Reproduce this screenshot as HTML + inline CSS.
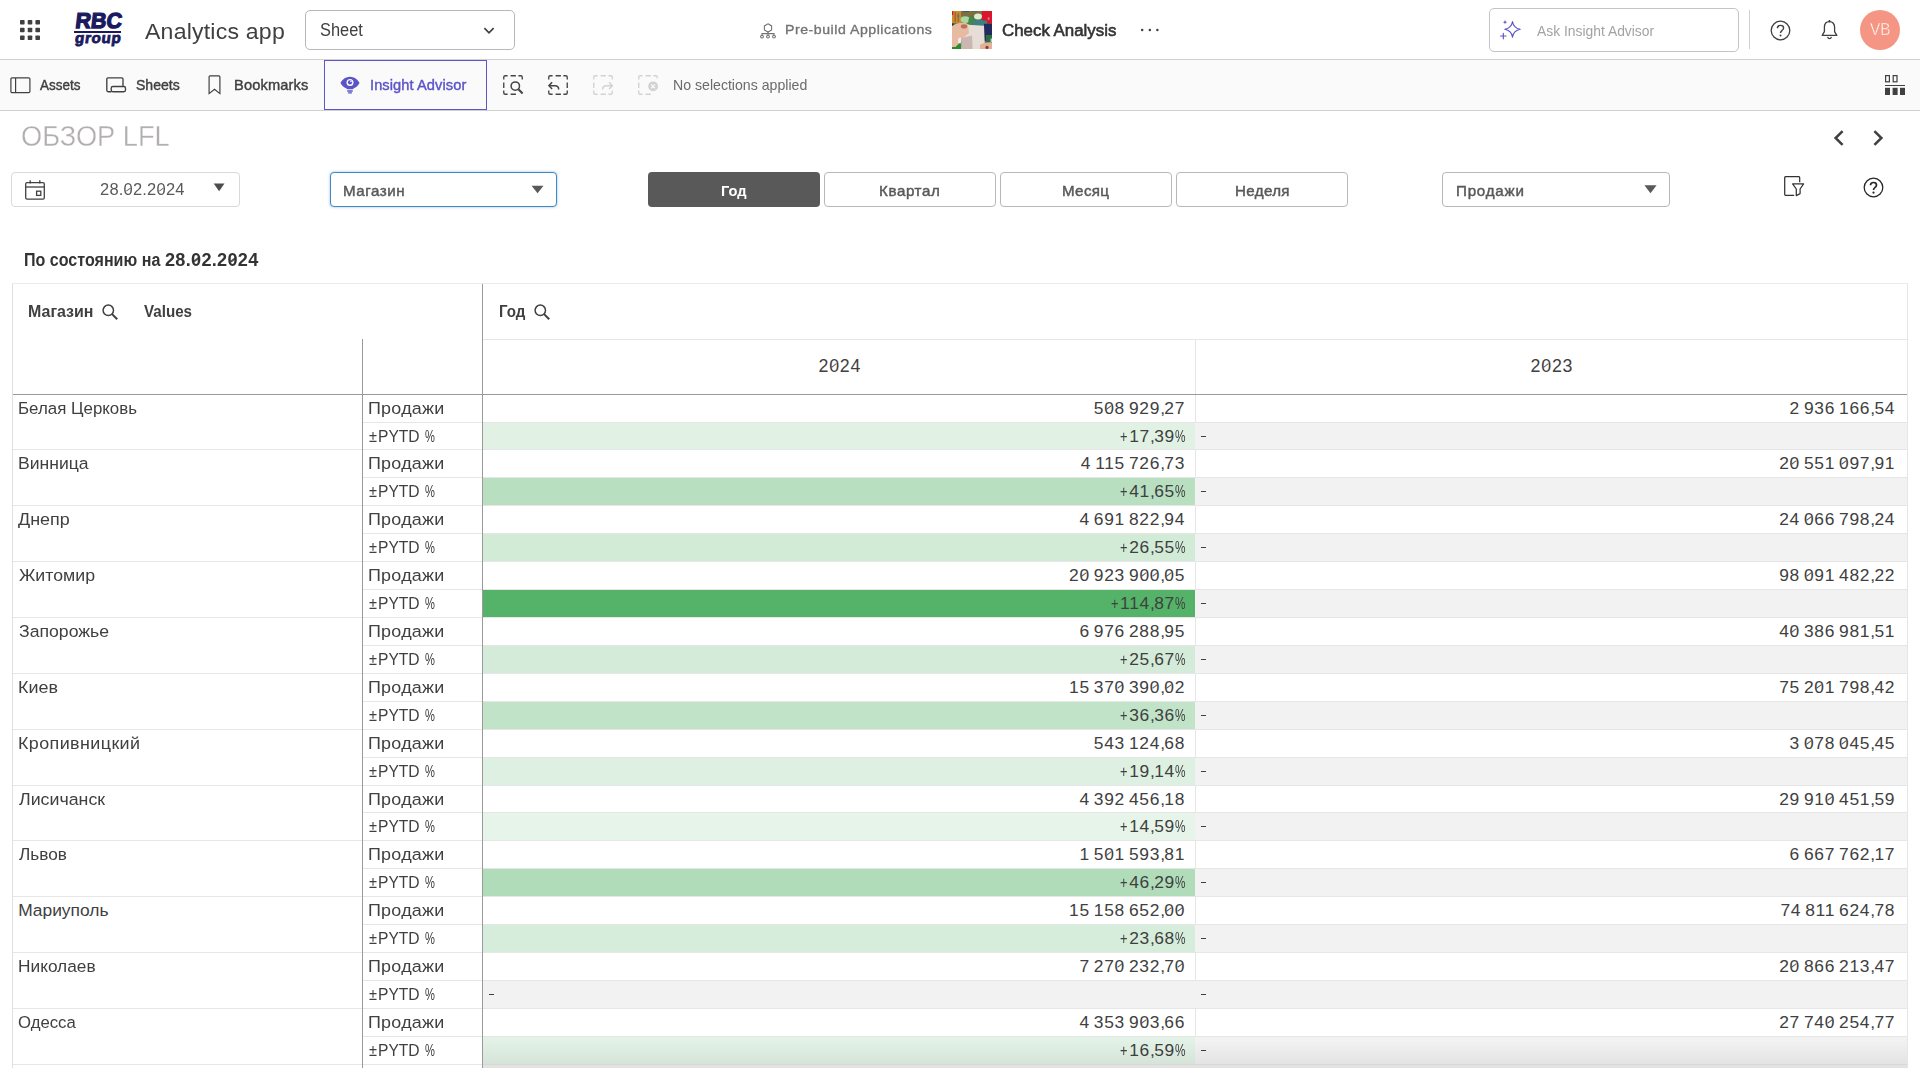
<!DOCTYPE html>
<html lang="ru"><head><meta charset="utf-8"><title>Check Analysis - ОБЗОР LFL</title>
<style>
html,body{margin:0;padding:0;background:#fff;}
body{width:1920px;height:1080px;overflow:hidden;position:relative;font-family:"Liberation Sans",sans-serif;}
.b{position:absolute;box-sizing:border-box;display:block;}
.t{position:absolute;white-space:nowrap;line-height:1;font-family:"Liberation Sans",sans-serif;}
.n{font-size:17.4px;letter-spacing:0.7px;color:#404040;}
.n i{font-style:normal;}
.z{font-weight:inherit;position:relative;}
.z::after{content:"";position:absolute;left:.112em;top:.506em;width:.333em;height:var(--zh,1px);background:currentColor;transform:rotate(-37deg);opacity:.85;}
.n .pc{display:inline-block;width:10.9px;letter-spacing:0;transform:scaleX(0.68);transform-origin:0 0;}
.n .pl{display:inline-block;width:8.9px;letter-spacing:0;transform:scaleX(0.74);transform-origin:0 0;}
</style></head>
<body>
<div class="b" style="left:0px;top:0px;width:1920px;height:59px;background:#fff;"></div>
<div class="b" style="left:0px;top:59px;width:1920px;height:1px;background:#d2d2d2;"></div>
<svg class="b" style="left:20px;top:20px;" width="20" height="20" viewBox="0 0 20 20"><rect x="0.0" y="0.0" width="4.6" height="4.6" rx="0.8" fill="#404040"/><rect x="7.7" y="0.0" width="4.6" height="4.6" rx="0.8" fill="#404040"/><rect x="15.4" y="0.0" width="4.6" height="4.6" rx="0.8" fill="#404040"/><rect x="0.0" y="7.7" width="4.6" height="4.6" rx="0.8" fill="#404040"/><rect x="7.7" y="7.7" width="4.6" height="4.6" rx="0.8" fill="#404040"/><rect x="15.4" y="7.7" width="4.6" height="4.6" rx="0.8" fill="#404040"/><rect x="0.0" y="15.4" width="4.6" height="4.6" rx="0.8" fill="#404040"/><rect x="7.7" y="15.4" width="4.6" height="4.6" rx="0.8" fill="#404040"/><rect x="15.4" y="15.4" width="4.6" height="4.6" rx="0.8" fill="#404040"/></svg>
<span class="t" style="top:10.00px;font-size:21.6px;color:#1a1a5e;left:76.74px;transform-origin:0 0;font-weight:700;transform:scaleX(0.9889) skewX(-7deg);-webkit-text-stroke:1.3px #1a1a5e;">RBC</span>
<div class="b" style="left:74px;top:31px;width:47px;height:2px;background:#1a1a5e;"></div>
<span class="t" style="top:31.00px;font-size:14.8px;color:#1a1a5e;left:75.78px;transform-origin:0 0;font-weight:700;letter-spacing:0.662px;transform:scaleX(1.0300) skewX(-7deg);-webkit-text-stroke:0.8px #1a1a5e;">group</span>
<span class="t" style="top:21.00px;font-size:22.4px;color:#404040;left:145.00px;transform-origin:0 0;letter-spacing:0.205px;transform:scaleX(1.0300) ;">Analytics app</span>
<div class="b" style="left:305px;top:10px;width:210px;height:40px;border:1px solid #b8b8b8;border-radius:5px;background:#fff;"></div>
<span class="t" style="top:22.00px;font-size:17.6px;color:#404040;left:320.30px;transform-origin:0 0;transform:scaleX(0.9304) ;">Sheet</span>
<svg class="b" style="left:482px;top:25px;" width="14" height="12" viewBox="0 0 14 12"><path d="M2.4 3.2 L7 7.8 L11.6 3.2" fill="none" stroke="#404040" stroke-width="1.7" stroke-linecap="butt" stroke-linejoin="miter"/></svg>
<svg class="b" style="left:759.5px;top:22.5px;" width="16" height="16" viewBox="0 0 16 16"><g fill="none" stroke="#737373" stroke-width="1.1"><path d="M8 0.8 L11.6 2.9 L11.6 6.9 L8 9 L4.4 6.9 L4.4 2.9 Z"/><path d="M8 9 V12.2 M2 12.2 V10.6 H14 V12.2"/><circle cx="2" cy="13.6" r="1.4"/><circle cx="8" cy="13.6" r="1.4"/><circle cx="14" cy="13.6" r="1.4"/></g></svg>
<span class="t" style="top:23.00px;font-size:13.7px;color:#737373;left:784.54px;transform-origin:0 0;letter-spacing:0.524px;transform:scaleX(1.0300) ;-webkit-text-stroke:0.35px #737373;">Pre-build Applications</span>
<svg class="b" style="left:952px;top:11px;" width="40" height="38" viewBox="0 0 40 38"><defs><filter id="bl" x="-10%" y="-10%" width="120%" height="120%"><feGaussianBlur stdDeviation="0.6"/></filter><clipPath id="cp"><rect x="0" y="0" width="40" height="38"/></clipPath></defs><g clip-path="url(#cp)"><g filter="url(#bl)"><rect x="-2" y="-2" width="44" height="42" fill="#4f7d4c"/><rect x="-2" y="-2" width="11.5" height="14" fill="#cf8a2f"/><rect x="2.6" y="1" width="1.2" height="10" fill="#9c5a2a"/><rect x="5.6" y="2" width="1.2" height="9" fill="#8a6a3a"/><rect x="-1" y="-1" width="2.2" height="5" fill="#c4201c"/><rect x="5.5" y="4" width="1.6" height="2.4" fill="#3f6fb0"/><rect x="-1" y="12.5" width="2.6" height="4" fill="#2a2a5e"/><rect x="9" y="-2" width="21" height="7.5" fill="#7c6f42"/><rect x="11" y="-1" width="6" height="1.8" fill="#2f4f7a"/><rect x="20" y="-1" width="5" height="1.6" fill="#3a6a58"/><ellipse cx="13.2" cy="8.6" rx="4.6" ry="3.4" fill="#abd89e"/><ellipse cx="19" cy="10" rx="2.6" ry="3.4" fill="#3f8a4a"/><ellipse cx="26" cy="5.6" rx="4" ry="3" fill="#dfe9d6"/><rect x="30" y="-2" width="12" height="14.5" fill="#d91529"/><ellipse cx="36.6" cy="7.6" rx="1" ry="1.6" fill="#e86aa0"/><rect x="21" y="9.5" width="14" height="5.5" fill="#3c8084"/><rect x="32" y="12.8" width="10" height="17" fill="#242a5e"/><rect x="34" y="24" width="8" height="7.5" fill="#2f6d3c"/><rect x="38.6" y="27.5" width="2" height="3.5" fill="#b9d4ea"/><rect x="-2" y="32" width="12" height="8" fill="#2c8c2c"/><path d="M0 15 Q6 10.5 14 12 L21 16 L18 24 L9.5 30 L3.5 36 L0 36 Z" fill="#e8baa1"/><ellipse cx="12" cy="15.4" rx="3.2" ry="2.1" fill="#b4735a"/><path d="M6.2 27.5 L9 26.5 L8.8 32.6 L6.2 32 Z" fill="#f1efee"/><path d="M16 13.8 L32 14.8 L33 38 L9.4 38 L10 28 L17 22 Z" fill="#e7ddd7"/><path d="M9.4 27 L20 24.5 L20.6 38 L9.4 38 Z" fill="#cbb6b1"/><path d="M28 34 Q33 30.2 42 31.5 L42 40 L28 40 Z" fill="#e3b199"/><ellipse cx="35" cy="36.4" rx="1.6" ry="1.6" fill="#8c3a2c"/></g></g></svg>
<span class="t" style="top:22.00px;font-size:17.3px;color:#333;left:1001.55px;transform-origin:0 0;transform:scaleX(0.9764) ;-webkit-text-stroke:0.6px #333;">Check Analysis</span>
<svg class="b" style="left:1140px;top:27px;" width="20" height="6" viewBox="0 0 20 6"><circle cx="2.2" cy="3" r="1.25" fill="#404040"/><circle cx="9.8" cy="3" r="1.25" fill="#404040"/><circle cx="17.4" cy="3" r="1.25" fill="#404040"/></svg>
<div class="b" style="left:1489px;top:8px;width:250px;height:44px;border:1px solid #c4c4c4;border-radius:5px;background:#fff;"></div>
<svg class="b" style="left:1500px;top:20px;" width="21" height="20" viewBox="0 0 21 20"><g fill="none" stroke="#5b54c7" stroke-width="1.15" stroke-linejoin="round"><path d="M12.5 1.5 C13.2 6.3 15.3 8.4 20.2 9.3 C15.3 10.2 13.2 12.3 12.5 17.1 C11.8 12.3 9.7 10.2 4.8 9.3 C9.7 8.4 11.8 6.3 12.5 1.5 Z"/><path d="M3.3 13.2 V18.8 M0.5 16 H6.1" stroke-linecap="round"/></g><path d="M5 0 L5.6 1.6 L7.2 2.2 L5.6 2.8 L5 4.4 L4.4 2.8 L2.8 2.2 L4.4 1.6 Z" fill="#5b54c7"/></svg>
<span class="t" style="top:23.00px;font-size:15.2px;color:#a3a3a3;left:1536.60px;transform-origin:0 0;transform:scaleX(0.9127) ;">Ask Insight Advisor</span>
<div class="b" style="left:1749px;top:10px;width:1px;height:39px;background:#d0d0d0;"></div>
<svg class="b" style="left:1769.5px;top:19.5px;" width="21" height="21" viewBox="0 0 21 21"><circle cx="10.5" cy="10.5" r="9.3" fill="none" stroke="#404040" stroke-width="1.3"/><path d="M7.4 8.3 C7.4 6.4 8.8 5.4 10.5 5.4 C12.3 5.4 13.6 6.5 13.6 8 C13.6 9.3 12.8 9.9 11.9 10.6 C11 11.3 10.5 11.8 10.5 13" fill="none" stroke="#404040" stroke-width="1.4"/><circle cx="10.5" cy="15.4" r="1" fill="#404040"/></svg>
<svg class="b" style="left:1821px;top:20px;" width="17" height="20" viewBox="0 0 17 20"><path d="M8.5 1.6 C5.2 1.6 3.4 4 3.4 7.4 V11.6 L1.2 15.4 H15.8 L13.6 11.6 V7.4 C13.6 4 11.8 1.6 8.5 1.6 Z" fill="none" stroke="#404040" stroke-width="1.3" stroke-linejoin="round"/><path d="M6.6 16.8 C6.9 18 7.6 18.6 8.5 18.6 C9.4 18.6 10.1 18 10.4 16.8" fill="none" stroke="#404040" stroke-width="1.3"/><path d="M8.5 0.4 V1.8" stroke="#404040" stroke-width="1.6" stroke-linecap="round"/></svg>
<div class="b" style="left:1860px;top:10px;width:40px;height:40px;border-radius:50%;background:#f59684;"></div>
<span class="t" style="top:21.00px;font-size:16.4px;color:#fff;left:1869.90px;transform-origin:0 0;transform:scaleX(0.9381) ;-webkit-text-stroke:0.45px #f59684;">VB</span>
<div class="b" style="left:0px;top:60px;width:1920px;height:50px;background:#fafafa;"></div>
<div class="b" style="left:0px;top:110px;width:1920px;height:1px;background:#d0d0d0;"></div>
<svg class="b" style="left:9.5px;top:76.5px;" width="21" height="17" viewBox="0 0 21 17"><rect x="0.9" y="0.9" width="19" height="14.8" rx="1.2" fill="none" stroke="#404040" stroke-width="1.2"/><path d="M5.6 0.9 V15.7" stroke="#404040" stroke-width="1.2"/></svg>
<span class="t" style="top:78.00px;font-size:14.2px;color:#404040;left:40.40px;transform-origin:0 0;transform:scaleX(0.9515) ;-webkit-text-stroke:0.4px #404040;">Assets</span>
<svg class="b" style="left:106px;top:77px;" width="21" height="16" viewBox="0 0 21 16"><path d="M5.4 14.7 H2.2 C1.3 14.7 0.8 14.1 0.8 13.3 V2.1 C0.8 1.3 1.3 0.8 2.1 0.8 H15.7 C16.5 0.8 17 1.3 17 2.1 V9.6" fill="none" stroke="#404040" stroke-width="1.35"/><rect x="5.2" y="9.5" width="14.3" height="5.2" rx="1.7" fill="none" stroke="#404040" stroke-width="1.35"/></svg>
<span class="t" style="top:78.00px;font-size:14.2px;color:#404040;left:135.78px;transform-origin:0 0;transform:scaleX(0.9896) ;-webkit-text-stroke:0.4px #404040;">Sheets</span>
<svg class="b" style="left:207.5px;top:75px;" width="13" height="20" viewBox="0 0 13 20"><path d="M1.1 1.9 C1.1 1.3 1.5 0.9 2.1 0.9 H10.9 C11.5 0.9 11.9 1.3 11.9 1.9 V18.6 L6.5 14.2 L1.1 18.6 Z" fill="none" stroke="#404040" stroke-width="1.2" stroke-linejoin="miter"/></svg>
<span class="t" style="top:78.00px;font-size:14.2px;color:#404040;left:234.24px;transform-origin:0 0;letter-spacing:0.144px;transform:scaleX(1.0300) ;-webkit-text-stroke:0.4px #404040;">Bookmarks</span>
<div class="b" style="left:324px;top:60px;width:163px;height:50px;border:1px solid #5d55c8;background:#fafafa;"></div>
<svg class="b" style="left:340px;top:76px;" width="20" height="18" viewBox="0 0 20 18"><path d="M10 0.8 C4.8 0.8 1.6 4.6 0.5 6.9 C1.5 8.9 3.7 11.4 6.7 12.5 V13.2 H13.3 V12.5 C16.3 11.4 18.5 8.9 19.5 6.9 C18.4 4.6 15.2 0.8 10 0.8 Z" fill="#5b54c7"/><circle cx="10" cy="6.4" r="3.5" fill="#fafafa"/><circle cx="10" cy="6.4" r="2.1" fill="#5b54c7"/><circle cx="10.9" cy="5.5" r="0.8" fill="#fafafa"/><rect x="7.2" y="14.3" width="5.6" height="1.5" rx="0.4" fill="#5b54c7"/><rect x="8" y="16.3" width="4" height="1.2" rx="0.5" fill="#5b54c7"/></svg>
<span class="t" style="top:78.00px;font-size:14.2px;color:#5b54c7;left:370.01px;transform-origin:0 0;letter-spacing:0.084px;transform:scaleX(1.0300) ;-webkit-text-stroke:0.4px #5b54c7;">Insight Advisor</span>
<svg class="b" style="left:503px;top:75px;" width="21" height="21" viewBox="0 0 21 21"><path d="M0.75 4.6 V2.25 Q0.75 0.75 2.25 0.75 H4.6 M7.6 0.75 H12.9 M15.4 0.75 H17.75 Q19.25 0.75 19.25 2.25 V4.6 M0.75 7.6 V12.9 M0.75 15.4 V17.75 Q0.75 19.25 2.25 19.25 H4.6 M7.6 19.25 H12.9" fill="none" stroke="#454545" stroke-width="1.35"/><circle cx="12.3" cy="11.1" r="4.2" fill="none" stroke="#454545" stroke-width="1.5"/><path d="M15.4 14.2 L19.6 18.4" stroke="#454545" stroke-width="2.1"/></svg>
<svg class="b" style="left:548px;top:75px;" width="21" height="21" viewBox="0 0 21 21"><path d="M0.75 4.6 V2.25 Q0.75 0.75 2.25 0.75 H4.6 M7.6 0.75 H12.9 M15.4 0.75 H17.75 Q19.25 0.75 19.25 2.25 V4.6 M19.25 7.6 V12.9 M0.75 15.4 V17.75 Q0.75 19.25 2.25 19.25 H4.6 M7.6 19.25 H12.9 M15.4 19.25 H17.75 Q19.25 19.25 19.25 17.75 V15.4" fill="none" stroke="#454545" stroke-width="1.35"/><path d="M1 10.7 H7 C9.4 10.7 10.7 12 10.7 14.6" fill="none" stroke="#454545" stroke-width="1.5"/><path d="M4.1 7.3 L0.9 10.7 L4.1 14.1" fill="none" stroke="#454545" stroke-width="1.5"/></svg>
<svg class="b" style="left:593px;top:75px;" width="21" height="21" viewBox="0 0 21 21"><path d="M0.75 4.6 V2.25 Q0.75 0.75 2.25 0.75 H4.6 M7.6 0.75 H12.9 M15.4 0.75 H17.75 Q19.25 0.75 19.25 2.25 V4.6 M0.75 7.6 V12.9 M0.75 15.4 V17.75 Q0.75 19.25 2.25 19.25 H4.6 M7.6 19.25 H12.9 M15.4 19.25 H17.75 Q19.25 19.25 19.25 17.75 V15.4" fill="none" stroke="#d2d2d2" stroke-width="1.35"/><path d="M19.2 10.7 H13.4 C11 10.7 9.6 12 9.6 14.6" fill="none" stroke="#d2d2d2" stroke-width="1.5"/><path d="M16.1 7.3 L19.3 10.7 L16.1 14.1" fill="none" stroke="#d2d2d2" stroke-width="1.5"/></svg>
<svg class="b" style="left:638px;top:75px;" width="21" height="21" viewBox="0 0 21 21"><path d="M0.75 4.6 V2.25 Q0.75 0.75 2.25 0.75 H4.6 M7.6 0.75 H12.9 M15.4 0.75 H17.75 Q19.25 0.75 19.25 2.25 V3.2 M0.75 7.6 V12.9 M0.75 15.4 V17.75 Q0.75 19.25 2.25 19.25 H4.6 M7.6 19.25 H12.9" fill="none" stroke="#d2d2d2" stroke-width="1.35"/><circle cx="15.1" cy="11.3" r="4.9" fill="#d2d2d2"/><path d="M13.2 9.4 L17 13.2 M17 9.4 L13.2 13.2" stroke="#fafafa" stroke-width="1.3"/></svg>
<span class="t" style="top:78.00px;font-size:14.2px;color:#6b6b6b;left:673.18px;transform-origin:0 0;transform:scaleX(0.9955) ;">No selections applied</span>
<svg class="b" style="left:1885px;top:75px;" width="20" height="20" viewBox="0 0 20 20"><rect x="0.6" y="0.6" width="3.8" height="6.2" fill="none" stroke="#404040" stroke-width="1.2"/><rect x="8.2" y="0.6" width="3.8" height="6.2" fill="none" stroke="#404040" stroke-width="1.2"/><rect x="0" y="10" width="20" height="1" fill="#404040"/><rect x="0" y="12.8" width="5" height="7.2" fill="#404040"/><rect x="7.6" y="12.8" width="5" height="7.2" fill="#404040"/><rect x="15" y="12.8" width="5" height="7.2" fill="#404040"/></svg>
<span class="t" style="top:121.00px;font-size:29.7px;color:#b3afaf;left:21.04px;transform-origin:0 0;transform:scaleX(0.9174) ;-webkit-text-stroke:0.3px #fff;">ОБЗОР LFL</span>
<svg class="b" style="left:1832px;top:129px;" width="14" height="18" viewBox="0 0 14 18"><path d="M10.6 2.2 L3.6 9 L10.6 15.8" fill="none" stroke="#404040" stroke-width="2.5"/></svg>
<svg class="b" style="left:1871.2px;top:129px;" width="14" height="18" viewBox="0 0 14 18"><path d="M3.4 2.2 L10.4 9 L3.4 15.8" fill="none" stroke="#404040" stroke-width="2.5"/></svg>
<div class="b" style="left:11px;top:172px;width:229px;height:35px;border:1px solid #d9d9d9;border-radius:4px;background:#fff;"></div>
<svg class="b" style="left:25px;top:180px;" width="20" height="20" viewBox="0 0 20 20"><rect x="0.7" y="2.7" width="18.6" height="16.4" rx="1.4" fill="none" stroke="#404040" stroke-width="1.3"/><path d="M0.7 7 H19.3" stroke="#404040" stroke-width="1.3"/><path d="M5.2 0.3 V3.4 M14.8 0.3 V3.4" stroke="#404040" stroke-width="1.3"/><rect x="11.6" y="11.2" width="4.2" height="4.2" fill="none" stroke="#404040" stroke-width="1.3"/></svg>
<span class="t" style="top:182.00px;font-size:16px;color:#595959;left:100.48px;transform-origin:0 0;letter-spacing:0.206px;transform:scaleX(1.0300) ;">28.<b class="z">0</b>2.2<b class="z">0</b>24</span>
<svg class="b" style="left:213px;top:183px;" width="12" height="9" viewBox="0 0 12 9"><path d="M0.7 0.4 H11.5 L6.1 8.2 Z" fill="#4d4d4d"/></svg>
<div class="b" style="left:330px;top:172px;width:227px;height:35px;border:1px solid #3f8ac4;border-radius:4px;background:#fff;box-shadow:0 0 3px rgba(63,138,196,0.55);"></div>
<span class="t" style="top:184.00px;font-size:14.7px;color:#595959;left:342.74px;transform-origin:0 0;letter-spacing:0.535px;transform:scaleX(1.0300) ;-webkit-text-stroke:0.45px #595959;">Магазин</span>
<svg class="b" style="left:531px;top:185px;" width="13" height="9" viewBox="0 0 13 9"><path d="M0.6 0.7 H12.5 L6.55 8.3 Z" fill="#595959"/></svg>
<div class="b" style="left:648px;top:172px;width:172px;height:35px;background:#595959;border-radius:4px;"></div>
<span class="t" style="top:183.00px;font-size:15.4px;color:#fff;left:720.65px;transform-origin:0 0;font-weight:700;transform:scaleX(0.9522) ;">Год</span>
<div class="b" style="left:824px;top:172px;width:172px;height:35px;border:1px solid #b8b8b8;border-radius:4px;background:#fff;"></div>
<span class="t" style="top:184.00px;font-size:14.7px;color:#595959;left:879.44px;transform-origin:0 0;letter-spacing:0.593px;transform:scaleX(1.0300) ;-webkit-text-stroke:0.45px #595959;">Квартал</span>
<div class="b" style="left:1000px;top:172px;width:172px;height:35px;border:1px solid #b8b8b8;border-radius:4px;background:#fff;"></div>
<span class="t" style="top:184.00px;font-size:14.7px;color:#595959;left:1062.14px;transform-origin:0 0;letter-spacing:0.342px;transform:scaleX(1.0300) ;-webkit-text-stroke:0.45px #595959;">Месяц</span>
<div class="b" style="left:1176px;top:172px;width:172px;height:35px;border:1px solid #b8b8b8;border-radius:4px;background:#fff;"></div>
<span class="t" style="top:184.00px;font-size:14.7px;color:#595959;left:1234.54px;transform-origin:0 0;letter-spacing:0.339px;transform:scaleX(1.0300) ;-webkit-text-stroke:0.45px #595959;">Неделя</span>
<div class="b" style="left:1442px;top:172px;width:228px;height:35px;border:1px solid #b8b8b8;border-radius:4px;background:#fff;"></div>
<span class="t" style="top:184.00px;font-size:14.7px;color:#595959;left:1455.54px;transform-origin:0 0;letter-spacing:0.763px;transform:scaleX(1.0300) ;-webkit-text-stroke:0.45px #595959;">Продажи</span>
<svg class="b" style="left:1644px;top:185px;" width="13" height="9" viewBox="0 0 13 9"><path d="M0.4 0.2 H12.6 L6.5 8.3 Z" fill="#595959"/></svg>
<svg class="b" style="left:1783.6px;top:176.3px;" width="21" height="21" viewBox="0 0 21 21"><path d="M10.2 19.4 H1.8 C1.2 19.4 0.7 18.9 0.7 18.3 V1.7 C0.7 1.1 1.2 0.6 1.8 0.6 H14.6 C15.2 0.6 15.7 1.1 15.7 1.7 V6.2" fill="none" stroke="#333" stroke-width="1.25"/><path d="M8.6 7.9 H19.6 L16.1 13 V17.6 L12.3 19.6 V13 Z" fill="#fff" stroke="#333" stroke-width="1.25" stroke-linejoin="round"/></svg>
<svg class="b" style="left:1863.2px;top:176.7px;" width="21" height="21" viewBox="0 0 21 21"><circle cx="10.5" cy="10.5" r="9.3" fill="none" stroke="#262626" stroke-width="1.3"/><path d="M7.5 8.3 C7.5 6.5 8.8 5.5 10.5 5.5 C12.3 5.5 13.5 6.5 13.5 8 C13.5 9.3 12.8 9.9 11.9 10.6 C11 11.3 10.5 11.8 10.5 13" fill="none" stroke="#262626" stroke-width="1.7"/><circle cx="10.5" cy="15.6" r="1.15" fill="#262626"/></svg>
<span class="t" style="top:252.00px;font-size:17.6px;color:#333;left:23.77px;transform-origin:0 0;font-weight:700;transform:scaleX(0.9130) ;">По состоянию на</span>
<span class="t" style="top:252.00px;font-size:17.6px;color:#333;left:164.89px;transform-origin:0 0;font-weight:700;letter-spacing:0.275px;transform:scaleX(1.0300) ;--zh:1.6px;">28.<b class="z">0</b>2.2<b class="z">0</b>24</span>
<div class="b" style="left:12px;top:283px;width:1896px;height:1px;background:#ebebeb;"></div>
<div class="b" style="left:12px;top:284px;width:1px;height:784px;background:#e0e0e0;"></div>
<div class="b" style="left:1907px;top:284px;width:1px;height:784px;background:#e6e6e6;"></div>
<span class="t" style="top:303.00px;font-size:16.3px;color:#404040;left:28.42px;transform-origin:0 0;font-weight:700;transform:scaleX(0.9810) ;">Магазин</span>
<svg class="b" style="left:102px;top:304px;" width="16" height="16" viewBox="0 0 16 16"><circle cx="6.3" cy="6.3" r="5.2" fill="none" stroke="#404040" stroke-width="1.5"/><path d="M10.1 10.1 L15.2 15.2" stroke="#404040" stroke-width="2" stroke-linecap="butt"/></svg>
<span class="t" style="top:303.00px;font-size:16.3px;color:#404040;left:144.40px;transform-origin:0 0;font-weight:700;transform:scaleX(0.9297) ;">Values</span>
<span class="t" style="top:303.00px;font-size:16.3px;color:#404040;left:498.67px;transform-origin:0 0;font-weight:700;transform:scaleX(0.9284) ;">Год</span>
<svg class="b" style="left:534px;top:304px;" width="16" height="16" viewBox="0 0 16 16"><circle cx="6.3" cy="6.3" r="5.2" fill="none" stroke="#404040" stroke-width="1.5"/><path d="M10.1 10.1 L15.2 15.2" stroke="#404040" stroke-width="2" stroke-linecap="butt"/></svg>
<div class="b" style="left:483px;top:339px;width:1424px;height:1px;background:#e6e6e6;"></div>
<div class="b" style="left:1195px;top:340px;width:1px;height:54px;background:#e6e6e6;"></div>
<span class="t" style="top:358.00px;font-size:17.8px;color:#404040;left:818.52px;transform-origin:0 0;letter-spacing:0.725px;">2<b class="z">0</b>24</span>
<span class="t" style="top:358.00px;font-size:17.8px;color:#404040;left:1530.62px;transform-origin:0 0;letter-spacing:0.775px;">2<b class="z">0</b>23</span>
<div class="b" style="left:483px;top:423px;width:712px;height:26px;background:#e1f2e5;"></div>
<div class="b" style="left:1195px;top:423px;width:712px;height:26px;background:#f2f2f2;"></div>
<div class="b" style="left:1195px;top:395px;width:1px;height:27px;background:#e6e6e6;"></div>
<div class="b" style="left:363px;top:422px;width:1544px;height:1px;background:#e6e6e6;"></div>
<div class="b" style="left:13px;top:449px;width:1894px;height:1px;background:#e6e6e6;"></div>
<span class="t" style="top:400.00px;font-size:17.4px;color:#404040;left:18.16px;transform-origin:0 0;transform:scaleX(0.9711) ;">Белая Церковь</span>
<span class="t" style="top:400.00px;font-size:17.4px;color:#404040;left:367.78px;transform-origin:0 0;letter-spacing:0.243px;transform:scaleX(1.0300) ;">Продажи</span>
<span class="t" style="top:428.00px;font-size:17.4px;color:#404040;left:369.28px;transform-origin:0 0;transform:scaleX(0.8353) ;">±</span>
<span class="t" style="top:428.00px;font-size:17.4px;color:#404040;left:378.47px;transform-origin:0 0;transform:scaleX(0.8975) ;">PYTD</span>
<span class="t" style="top:428.00px;font-size:17.4px;color:#404040;left:424.68px;transform-origin:0 0;transform:scaleX(0.6400) ;">%</span>
<span class="t n" style="top:400.00px;right:734.90px;">5<b class="z">0</b>8<i style="letter-spacing:-0.8px"> </i>929<i style="letter-spacing:-0.6px">,</i>27</span>
<span class="t n" style="top:400.00px;right:24.80px;">2<i style="letter-spacing:-0.8px"> </i>936<i style="letter-spacing:-0.8px"> </i>166<i style="letter-spacing:-0.6px">,</i>54</span>
<span class="t n" style="top:428.00px;right:734.20px;"><i class="pl">+</i>17<i style="letter-spacing:-0.6px">,</i>39<i class="pc">%</i></span>
<div class="b" style="left:1201px;top:436px;width:5px;height:1.3px;background:#404040;"></div>
<div class="b" style="left:483px;top:478px;width:712px;height:27px;background:#b8dfc0;"></div>
<div class="b" style="left:1195px;top:478px;width:712px;height:27px;background:#f2f2f2;"></div>
<div class="b" style="left:1195px;top:450px;width:1px;height:27px;background:#e6e6e6;"></div>
<div class="b" style="left:363px;top:477px;width:1544px;height:1px;background:#e6e6e6;"></div>
<div class="b" style="left:13px;top:505px;width:1894px;height:1px;background:#e6e6e6;"></div>
<span class="t" style="top:455.00px;font-size:17.4px;color:#404040;left:18.01px;transform-origin:0 0;transform:scaleX(1.0102) ;">Винница</span>
<span class="t" style="top:455.00px;font-size:17.4px;color:#404040;left:367.78px;transform-origin:0 0;letter-spacing:0.243px;transform:scaleX(1.0300) ;">Продажи</span>
<span class="t" style="top:483.00px;font-size:17.4px;color:#404040;left:369.28px;transform-origin:0 0;transform:scaleX(0.8353) ;">±</span>
<span class="t" style="top:483.00px;font-size:17.4px;color:#404040;left:378.47px;transform-origin:0 0;transform:scaleX(0.8975) ;">PYTD</span>
<span class="t" style="top:483.00px;font-size:17.4px;color:#404040;left:424.68px;transform-origin:0 0;transform:scaleX(0.6400) ;">%</span>
<span class="t n" style="top:455.00px;right:734.90px;">4<i style="letter-spacing:-0.8px"> </i>115<i style="letter-spacing:-0.8px"> </i>726<i style="letter-spacing:-0.6px">,</i>73</span>
<span class="t n" style="top:455.00px;right:24.80px;">2<b class="z">0</b><i style="letter-spacing:-0.8px"> </i>551<i style="letter-spacing:-0.8px"> </i><b class="z">0</b>97<i style="letter-spacing:-0.6px">,</i>91</span>
<span class="t n" style="top:483.00px;right:734.20px;"><i class="pl">+</i>41<i style="letter-spacing:-0.6px">,</i>65<i class="pc">%</i></span>
<div class="b" style="left:1201px;top:491px;width:5px;height:1.3px;background:#404040;"></div>
<div class="b" style="left:483px;top:534px;width:712px;height:27px;background:#d2ebd7;"></div>
<div class="b" style="left:1195px;top:534px;width:712px;height:27px;background:#f2f2f2;"></div>
<div class="b" style="left:1195px;top:506px;width:1px;height:27px;background:#e6e6e6;"></div>
<div class="b" style="left:363px;top:533px;width:1544px;height:1px;background:#e6e6e6;"></div>
<div class="b" style="left:13px;top:561px;width:1894px;height:1px;background:#e6e6e6;"></div>
<span class="t" style="top:511.00px;font-size:17.4px;color:#404040;left:18.47px;transform-origin:0 0;letter-spacing:0.018px;transform:scaleX(1.0300) ;">Днепр</span>
<span class="t" style="top:511.00px;font-size:17.4px;color:#404040;left:367.78px;transform-origin:0 0;letter-spacing:0.243px;transform:scaleX(1.0300) ;">Продажи</span>
<span class="t" style="top:539.00px;font-size:17.4px;color:#404040;left:369.28px;transform-origin:0 0;transform:scaleX(0.8353) ;">±</span>
<span class="t" style="top:539.00px;font-size:17.4px;color:#404040;left:378.47px;transform-origin:0 0;transform:scaleX(0.8975) ;">PYTD</span>
<span class="t" style="top:539.00px;font-size:17.4px;color:#404040;left:424.68px;transform-origin:0 0;transform:scaleX(0.6400) ;">%</span>
<span class="t n" style="top:511.00px;right:734.90px;">4<i style="letter-spacing:-0.8px"> </i>691<i style="letter-spacing:-0.8px"> </i>822<i style="letter-spacing:-0.6px">,</i>94</span>
<span class="t n" style="top:511.00px;right:24.80px;">24<i style="letter-spacing:-0.8px"> </i><b class="z">0</b>66<i style="letter-spacing:-0.8px"> </i>798<i style="letter-spacing:-0.6px">,</i>24</span>
<span class="t n" style="top:539.00px;right:734.20px;"><i class="pl">+</i>26<i style="letter-spacing:-0.6px">,</i>55<i class="pc">%</i></span>
<div class="b" style="left:1201px;top:547px;width:5px;height:1.3px;background:#404040;"></div>
<div class="b" style="left:483px;top:590px;width:712px;height:27px;background:#54b368;"></div>
<div class="b" style="left:1195px;top:590px;width:712px;height:27px;background:#f2f2f2;"></div>
<div class="b" style="left:1195px;top:562px;width:1px;height:27px;background:#e6e6e6;"></div>
<div class="b" style="left:363px;top:589px;width:1544px;height:1px;background:#e6e6e6;"></div>
<div class="b" style="left:13px;top:617px;width:1894px;height:1px;background:#e6e6e6;"></div>
<span class="t" style="top:567.00px;font-size:17.4px;color:#404040;left:19.27px;transform-origin:0 0;transform:scaleX(1.0197) ;">Житомир</span>
<span class="t" style="top:567.00px;font-size:17.4px;color:#404040;left:367.78px;transform-origin:0 0;letter-spacing:0.243px;transform:scaleX(1.0300) ;">Продажи</span>
<span class="t" style="top:595.00px;font-size:17.4px;color:#404040;left:369.28px;transform-origin:0 0;transform:scaleX(0.8353) ;">±</span>
<span class="t" style="top:595.00px;font-size:17.4px;color:#404040;left:378.47px;transform-origin:0 0;transform:scaleX(0.8975) ;">PYTD</span>
<span class="t" style="top:595.00px;font-size:17.4px;color:#404040;left:424.68px;transform-origin:0 0;transform:scaleX(0.6400) ;">%</span>
<span class="t n" style="top:567.00px;right:734.90px;">2<b class="z">0</b><i style="letter-spacing:-0.8px"> </i>923<i style="letter-spacing:-0.8px"> </i>9<b class="z">0</b><b class="z">0</b><i style="letter-spacing:-0.6px">,</i><b class="z">0</b>5</span>
<span class="t n" style="top:567.00px;right:24.80px;">98<i style="letter-spacing:-0.8px"> </i><b class="z">0</b>91<i style="letter-spacing:-0.8px"> </i>482<i style="letter-spacing:-0.6px">,</i>22</span>
<span class="t n" style="top:595.00px;right:734.20px;"><i class="pl">+</i>114<i style="letter-spacing:-0.6px">,</i>87<i class="pc">%</i></span>
<div class="b" style="left:1201px;top:603px;width:5px;height:1.3px;background:#404040;"></div>
<div class="b" style="left:483px;top:646px;width:712px;height:27px;background:#d3ebd8;"></div>
<div class="b" style="left:1195px;top:646px;width:712px;height:27px;background:#f2f2f2;"></div>
<div class="b" style="left:1195px;top:618px;width:1px;height:27px;background:#e6e6e6;"></div>
<div class="b" style="left:363px;top:645px;width:1544px;height:1px;background:#e6e6e6;"></div>
<div class="b" style="left:13px;top:673px;width:1894px;height:1px;background:#e6e6e6;"></div>
<span class="t" style="top:623.00px;font-size:17.4px;color:#404040;left:18.69px;transform-origin:0 0;transform:scaleX(1.0149) ;">Запорожье</span>
<span class="t" style="top:623.00px;font-size:17.4px;color:#404040;left:367.78px;transform-origin:0 0;letter-spacing:0.243px;transform:scaleX(1.0300) ;">Продажи</span>
<span class="t" style="top:651.00px;font-size:17.4px;color:#404040;left:369.28px;transform-origin:0 0;transform:scaleX(0.8353) ;">±</span>
<span class="t" style="top:651.00px;font-size:17.4px;color:#404040;left:378.47px;transform-origin:0 0;transform:scaleX(0.8975) ;">PYTD</span>
<span class="t" style="top:651.00px;font-size:17.4px;color:#404040;left:424.68px;transform-origin:0 0;transform:scaleX(0.6400) ;">%</span>
<span class="t n" style="top:623.00px;right:734.90px;">6<i style="letter-spacing:-0.8px"> </i>976<i style="letter-spacing:-0.8px"> </i>288<i style="letter-spacing:-0.6px">,</i>95</span>
<span class="t n" style="top:623.00px;right:24.80px;">4<b class="z">0</b><i style="letter-spacing:-0.8px"> </i>386<i style="letter-spacing:-0.8px"> </i>981<i style="letter-spacing:-0.6px">,</i>51</span>
<span class="t n" style="top:651.00px;right:734.20px;"><i class="pl">+</i>25<i style="letter-spacing:-0.6px">,</i>67<i class="pc">%</i></span>
<div class="b" style="left:1201px;top:659px;width:5px;height:1.3px;background:#404040;"></div>
<div class="b" style="left:483px;top:702px;width:712px;height:27px;background:#c1e3c8;"></div>
<div class="b" style="left:1195px;top:702px;width:712px;height:27px;background:#f2f2f2;"></div>
<div class="b" style="left:1195px;top:674px;width:1px;height:27px;background:#e6e6e6;"></div>
<div class="b" style="left:363px;top:701px;width:1544px;height:1px;background:#e6e6e6;"></div>
<div class="b" style="left:13px;top:729px;width:1894px;height:1px;background:#e6e6e6;"></div>
<span class="t" style="top:679.00px;font-size:17.4px;color:#404040;left:18.28px;transform-origin:0 0;letter-spacing:0.025px;transform:scaleX(1.0300) ;">Киев</span>
<span class="t" style="top:679.00px;font-size:17.4px;color:#404040;left:367.78px;transform-origin:0 0;letter-spacing:0.243px;transform:scaleX(1.0300) ;">Продажи</span>
<span class="t" style="top:707.00px;font-size:17.4px;color:#404040;left:369.28px;transform-origin:0 0;transform:scaleX(0.8353) ;">±</span>
<span class="t" style="top:707.00px;font-size:17.4px;color:#404040;left:378.47px;transform-origin:0 0;transform:scaleX(0.8975) ;">PYTD</span>
<span class="t" style="top:707.00px;font-size:17.4px;color:#404040;left:424.68px;transform-origin:0 0;transform:scaleX(0.6400) ;">%</span>
<span class="t n" style="top:679.00px;right:734.90px;">15<i style="letter-spacing:-0.8px"> </i>37<b class="z">0</b><i style="letter-spacing:-0.8px"> </i>39<b class="z">0</b><i style="letter-spacing:-0.6px">,</i><b class="z">0</b>2</span>
<span class="t n" style="top:679.00px;right:24.80px;">75<i style="letter-spacing:-0.8px"> </i>2<b class="z">0</b>1<i style="letter-spacing:-0.8px"> </i>798<i style="letter-spacing:-0.6px">,</i>42</span>
<span class="t n" style="top:707.00px;right:734.20px;"><i class="pl">+</i>36<i style="letter-spacing:-0.6px">,</i>36<i class="pc">%</i></span>
<div class="b" style="left:1201px;top:715px;width:5px;height:1.3px;background:#404040;"></div>
<div class="b" style="left:483px;top:758px;width:712px;height:27px;background:#def0e2;"></div>
<div class="b" style="left:1195px;top:758px;width:712px;height:27px;background:#f2f2f2;"></div>
<div class="b" style="left:1195px;top:730px;width:1px;height:27px;background:#e6e6e6;"></div>
<div class="b" style="left:363px;top:757px;width:1544px;height:1px;background:#e6e6e6;"></div>
<div class="b" style="left:13px;top:785px;width:1894px;height:1px;background:#e6e6e6;"></div>
<span class="t" style="top:735.00px;font-size:17.4px;color:#404040;left:18.08px;transform-origin:0 0;letter-spacing:0.393px;transform:scaleX(1.0300) ;">Кропивницкий</span>
<span class="t" style="top:735.00px;font-size:17.4px;color:#404040;left:367.78px;transform-origin:0 0;letter-spacing:0.243px;transform:scaleX(1.0300) ;">Продажи</span>
<span class="t" style="top:763.00px;font-size:17.4px;color:#404040;left:369.28px;transform-origin:0 0;transform:scaleX(0.8353) ;">±</span>
<span class="t" style="top:763.00px;font-size:17.4px;color:#404040;left:378.47px;transform-origin:0 0;transform:scaleX(0.8975) ;">PYTD</span>
<span class="t" style="top:763.00px;font-size:17.4px;color:#404040;left:424.68px;transform-origin:0 0;transform:scaleX(0.6400) ;">%</span>
<span class="t n" style="top:735.00px;right:734.90px;">543<i style="letter-spacing:-0.8px"> </i>124<i style="letter-spacing:-0.6px">,</i>68</span>
<span class="t n" style="top:735.00px;right:24.80px;">3<i style="letter-spacing:-0.8px"> </i><b class="z">0</b>78<i style="letter-spacing:-0.8px"> </i><b class="z">0</b>45<i style="letter-spacing:-0.6px">,</i>45</span>
<span class="t n" style="top:763.00px;right:734.20px;"><i class="pl">+</i>19<i style="letter-spacing:-0.6px">,</i>14<i class="pc">%</i></span>
<div class="b" style="left:1201px;top:771px;width:5px;height:1.3px;background:#404040;"></div>
<div class="b" style="left:483px;top:813px;width:712px;height:27px;background:#e6f4e9;"></div>
<div class="b" style="left:1195px;top:813px;width:712px;height:27px;background:#f2f2f2;"></div>
<div class="b" style="left:1195px;top:786px;width:1px;height:26px;background:#e6e6e6;"></div>
<div class="b" style="left:363px;top:812px;width:1544px;height:1px;background:#e6e6e6;"></div>
<div class="b" style="left:13px;top:840px;width:1894px;height:1px;background:#e6e6e6;"></div>
<span class="t" style="top:791.00px;font-size:17.4px;color:#404040;left:19.07px;transform-origin:0 0;transform:scaleX(1.0223) ;">Лисичанск</span>
<span class="t" style="top:791.00px;font-size:17.4px;color:#404040;left:367.78px;transform-origin:0 0;letter-spacing:0.243px;transform:scaleX(1.0300) ;">Продажи</span>
<span class="t" style="top:818.00px;font-size:17.4px;color:#404040;left:369.28px;transform-origin:0 0;transform:scaleX(0.8353) ;">±</span>
<span class="t" style="top:818.00px;font-size:17.4px;color:#404040;left:378.47px;transform-origin:0 0;transform:scaleX(0.8975) ;">PYTD</span>
<span class="t" style="top:818.00px;font-size:17.4px;color:#404040;left:424.68px;transform-origin:0 0;transform:scaleX(0.6400) ;">%</span>
<span class="t n" style="top:791.00px;right:734.90px;">4<i style="letter-spacing:-0.8px"> </i>392<i style="letter-spacing:-0.8px"> </i>456<i style="letter-spacing:-0.6px">,</i>18</span>
<span class="t n" style="top:791.00px;right:24.80px;">29<i style="letter-spacing:-0.8px"> </i>91<b class="z">0</b><i style="letter-spacing:-0.8px"> </i>451<i style="letter-spacing:-0.6px">,</i>59</span>
<span class="t n" style="top:818.00px;right:734.20px;"><i class="pl">+</i>14<i style="letter-spacing:-0.6px">,</i>59<i class="pc">%</i></span>
<div class="b" style="left:1201px;top:826px;width:5px;height:1.3px;background:#404040;"></div>
<div class="b" style="left:483px;top:869px;width:712px;height:27px;background:#b0dcb9;"></div>
<div class="b" style="left:1195px;top:869px;width:712px;height:27px;background:#f2f2f2;"></div>
<div class="b" style="left:1195px;top:841px;width:1px;height:27px;background:#e6e6e6;"></div>
<div class="b" style="left:363px;top:868px;width:1544px;height:1px;background:#e6e6e6;"></div>
<div class="b" style="left:13px;top:896px;width:1894px;height:1px;background:#e6e6e6;"></div>
<span class="t" style="top:846.00px;font-size:17.4px;color:#404040;left:19.08px;transform-origin:0 0;transform:scaleX(0.9916) ;">Львов</span>
<span class="t" style="top:846.00px;font-size:17.4px;color:#404040;left:367.78px;transform-origin:0 0;letter-spacing:0.243px;transform:scaleX(1.0300) ;">Продажи</span>
<span class="t" style="top:874.00px;font-size:17.4px;color:#404040;left:369.28px;transform-origin:0 0;transform:scaleX(0.8353) ;">±</span>
<span class="t" style="top:874.00px;font-size:17.4px;color:#404040;left:378.47px;transform-origin:0 0;transform:scaleX(0.8975) ;">PYTD</span>
<span class="t" style="top:874.00px;font-size:17.4px;color:#404040;left:424.68px;transform-origin:0 0;transform:scaleX(0.6400) ;">%</span>
<span class="t n" style="top:846.00px;right:734.90px;">1<i style="letter-spacing:-0.8px"> </i>5<b class="z">0</b>1<i style="letter-spacing:-0.8px"> </i>593<i style="letter-spacing:-0.6px">,</i>81</span>
<span class="t n" style="top:846.00px;right:24.80px;">6<i style="letter-spacing:-0.8px"> </i>667<i style="letter-spacing:-0.8px"> </i>762<i style="letter-spacing:-0.6px">,</i>17</span>
<span class="t n" style="top:874.00px;right:734.20px;"><i class="pl">+</i>46<i style="letter-spacing:-0.6px">,</i>29<i class="pc">%</i></span>
<div class="b" style="left:1201px;top:882px;width:5px;height:1.3px;background:#404040;"></div>
<div class="b" style="left:483px;top:925px;width:712px;height:27px;background:#d7eddb;"></div>
<div class="b" style="left:1195px;top:925px;width:712px;height:27px;background:#f2f2f2;"></div>
<div class="b" style="left:1195px;top:897px;width:1px;height:27px;background:#e6e6e6;"></div>
<div class="b" style="left:363px;top:924px;width:1544px;height:1px;background:#e6e6e6;"></div>
<div class="b" style="left:13px;top:952px;width:1894px;height:1px;background:#e6e6e6;"></div>
<span class="t" style="top:902.00px;font-size:17.4px;color:#404040;left:18.13px;transform-origin:0 0;">Мариуполь</span>
<span class="t" style="top:902.00px;font-size:17.4px;color:#404040;left:367.78px;transform-origin:0 0;letter-spacing:0.243px;transform:scaleX(1.0300) ;">Продажи</span>
<span class="t" style="top:930.00px;font-size:17.4px;color:#404040;left:369.28px;transform-origin:0 0;transform:scaleX(0.8353) ;">±</span>
<span class="t" style="top:930.00px;font-size:17.4px;color:#404040;left:378.47px;transform-origin:0 0;transform:scaleX(0.8975) ;">PYTD</span>
<span class="t" style="top:930.00px;font-size:17.4px;color:#404040;left:424.68px;transform-origin:0 0;transform:scaleX(0.6400) ;">%</span>
<span class="t n" style="top:902.00px;right:734.90px;">15<i style="letter-spacing:-0.8px"> </i>158<i style="letter-spacing:-0.8px"> </i>652<i style="letter-spacing:-0.6px">,</i><b class="z">0</b><b class="z">0</b></span>
<span class="t n" style="top:902.00px;right:24.80px;">74<i style="letter-spacing:-0.8px"> </i>811<i style="letter-spacing:-0.8px"> </i>624<i style="letter-spacing:-0.6px">,</i>78</span>
<span class="t n" style="top:930.00px;right:734.20px;"><i class="pl">+</i>23<i style="letter-spacing:-0.6px">,</i>68<i class="pc">%</i></span>
<div class="b" style="left:1201px;top:938px;width:5px;height:1.3px;background:#404040;"></div>
<div class="b" style="left:483px;top:981px;width:712px;height:27px;background:#f2f2f2;"></div>
<div class="b" style="left:1195px;top:981px;width:712px;height:27px;background:#f2f2f2;"></div>
<div class="b" style="left:1195px;top:953px;width:1px;height:27px;background:#e6e6e6;"></div>
<div class="b" style="left:363px;top:980px;width:1544px;height:1px;background:#e6e6e6;"></div>
<div class="b" style="left:13px;top:1008px;width:1894px;height:1px;background:#e6e6e6;"></div>
<span class="t" style="top:958.00px;font-size:17.4px;color:#404040;left:18.13px;transform-origin:0 0;transform:scaleX(0.9937) ;">Николаев</span>
<span class="t" style="top:958.00px;font-size:17.4px;color:#404040;left:367.78px;transform-origin:0 0;letter-spacing:0.243px;transform:scaleX(1.0300) ;">Продажи</span>
<span class="t" style="top:986.00px;font-size:17.4px;color:#404040;left:369.28px;transform-origin:0 0;transform:scaleX(0.8353) ;">±</span>
<span class="t" style="top:986.00px;font-size:17.4px;color:#404040;left:378.47px;transform-origin:0 0;transform:scaleX(0.8975) ;">PYTD</span>
<span class="t" style="top:986.00px;font-size:17.4px;color:#404040;left:424.68px;transform-origin:0 0;transform:scaleX(0.6400) ;">%</span>
<span class="t n" style="top:958.00px;right:734.90px;">7<i style="letter-spacing:-0.8px"> </i>27<b class="z">0</b><i style="letter-spacing:-0.8px"> </i>232<i style="letter-spacing:-0.6px">,</i>7<b class="z">0</b></span>
<span class="t n" style="top:958.00px;right:24.80px;">2<b class="z">0</b><i style="letter-spacing:-0.8px"> </i>866<i style="letter-spacing:-0.8px"> </i>213<i style="letter-spacing:-0.6px">,</i>47</span>
<div class="b" style="left:488.5px;top:994px;width:5px;height:1.3px;background:#404040;"></div>
<div class="b" style="left:1201px;top:994px;width:5px;height:1.3px;background:#404040;"></div>
<div class="b" style="left:483px;top:1037px;width:712px;height:27px;background:#e3f2e6;"></div>
<div class="b" style="left:1195px;top:1037px;width:712px;height:27px;background:#f2f2f2;"></div>
<div class="b" style="left:1195px;top:1009px;width:1px;height:27px;background:#e6e6e6;"></div>
<div class="b" style="left:363px;top:1036px;width:1544px;height:1px;background:#e6e6e6;"></div>
<div class="b" style="left:13px;top:1064px;width:1894px;height:1px;background:#e6e6e6;"></div>
<span class="t" style="top:1014.00px;font-size:17.4px;color:#404040;left:18.48px;transform-origin:0 0;transform:scaleX(0.9617) ;">Одесса</span>
<span class="t" style="top:1014.00px;font-size:17.4px;color:#404040;left:367.78px;transform-origin:0 0;letter-spacing:0.243px;transform:scaleX(1.0300) ;">Продажи</span>
<span class="t" style="top:1042.00px;font-size:17.4px;color:#404040;left:369.28px;transform-origin:0 0;transform:scaleX(0.8353) ;">±</span>
<span class="t" style="top:1042.00px;font-size:17.4px;color:#404040;left:378.47px;transform-origin:0 0;transform:scaleX(0.8975) ;">PYTD</span>
<span class="t" style="top:1042.00px;font-size:17.4px;color:#404040;left:424.68px;transform-origin:0 0;transform:scaleX(0.6400) ;">%</span>
<span class="t n" style="top:1014.00px;right:734.90px;">4<i style="letter-spacing:-0.8px"> </i>353<i style="letter-spacing:-0.8px"> </i>9<b class="z">0</b>3<i style="letter-spacing:-0.6px">,</i>66</span>
<span class="t n" style="top:1014.00px;right:24.80px;">27<i style="letter-spacing:-0.8px"> </i>74<b class="z">0</b><i style="letter-spacing:-0.8px"> </i>254<i style="letter-spacing:-0.6px">,</i>77</span>
<span class="t n" style="top:1042.00px;right:734.20px;"><i class="pl">+</i>16<i style="letter-spacing:-0.6px">,</i>59<i class="pc">%</i></span>
<div class="b" style="left:1201px;top:1050px;width:5px;height:1.3px;background:#404040;"></div>
<div class="b" style="left:13px;top:394px;width:1894px;height:1px;background:#9a9a9a;"></div>
<div class="b" style="left:362px;top:339px;width:1px;height:729px;background:#9a9a9a;"></div>
<div class="b" style="left:482px;top:284px;width:1px;height:784px;background:#9a9a9a;"></div>
<div class="b" style="left:483px;top:1065px;width:1424px;height:3px;background:#f2f2f2;"></div>
<div class="b" style="left:483px;top:1040px;width:1424px;height:28px;background:linear-gradient(to bottom,rgba(0,0,0,0) 0%,rgba(0,0,0,0.07) 100%);"></div>
<div class="b" style="left:0px;top:1068px;width:1920px;height:12px;background:#fff;"></div>
</body></html>
